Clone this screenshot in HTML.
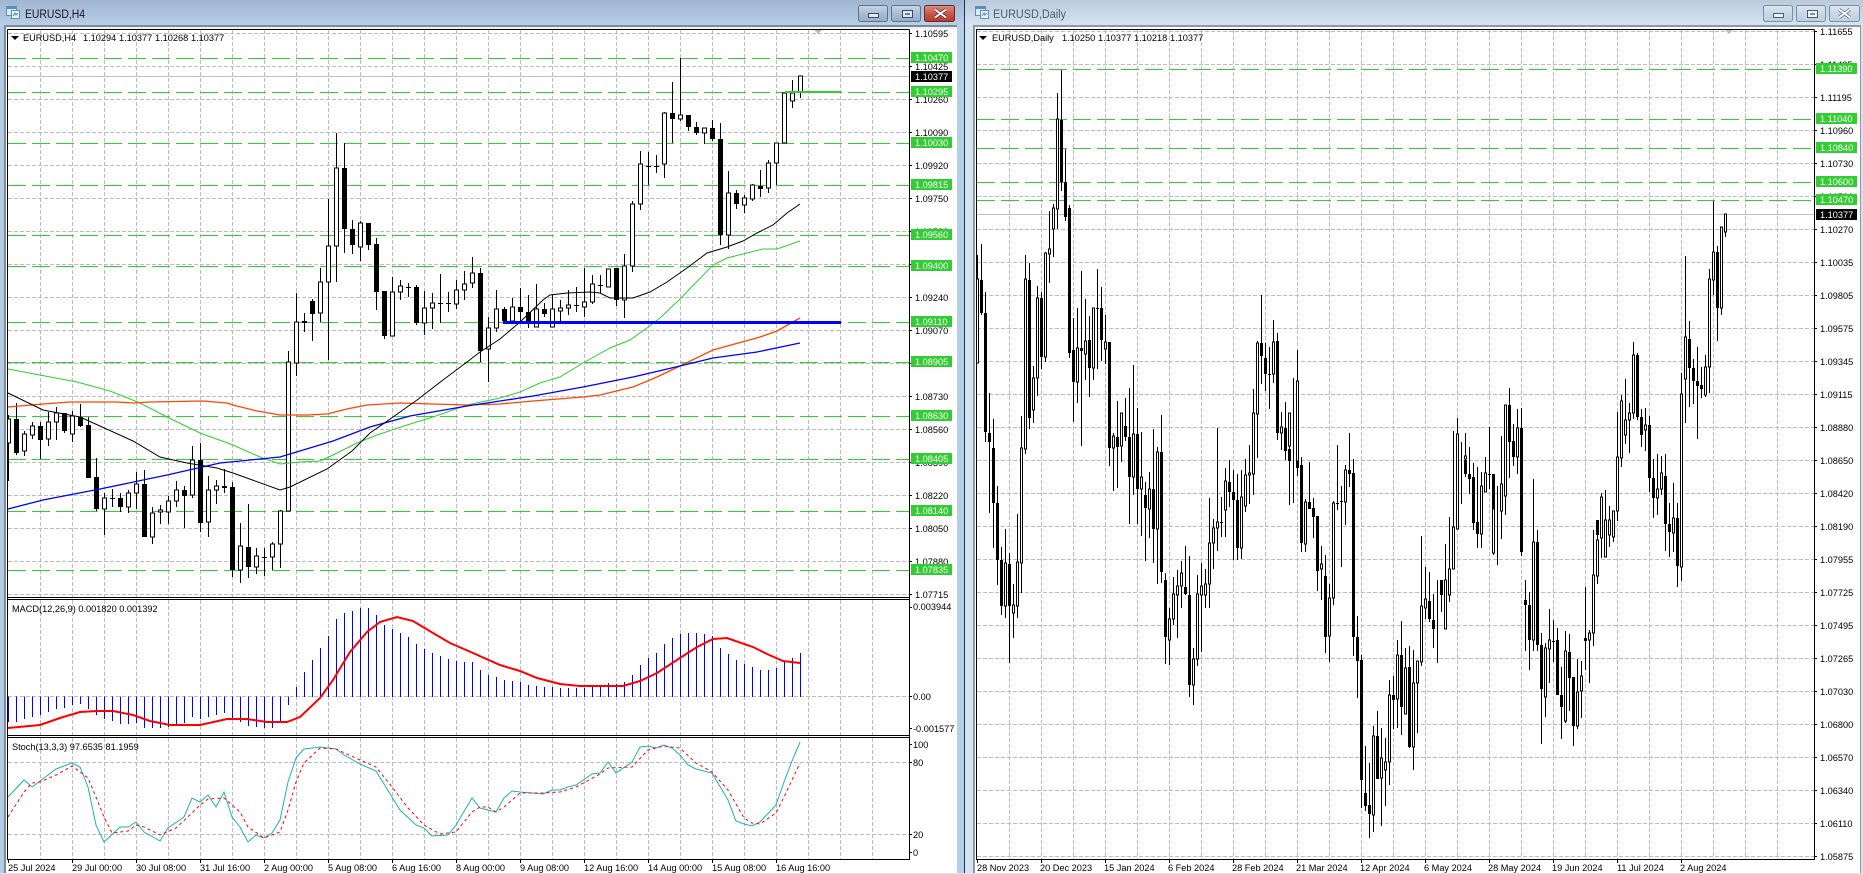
<!DOCTYPE html>
<html><head><meta charset="utf-8"><title>EURUSD</title>
<style>
html,body{margin:0;padding:0;background:#fff;overflow:hidden}
svg{display:block}
text{font-family:"Liberation Sans",sans-serif;font-size:9.2px;fill:#000}
.w{fill:#fff}
</style></head><body>
<svg xmlns="http://www.w3.org/2000/svg" width="1863" height="874" viewBox="0 0 1863 874">
<defs>
<linearGradient id="ta" x1="0" y1="0" x2="0" y2="1"><stop offset="0" stop-color="#9fb5d1"/><stop offset="1" stop-color="#b9d0e9"/></linearGradient>
<linearGradient id="ti" x1="0" y1="0" x2="0" y2="1"><stop offset="0" stop-color="#bbcadb"/><stop offset="1" stop-color="#d6e5f3"/></linearGradient>
<linearGradient id="ba" x1="0" y1="0" x2="0" y2="1"><stop offset="0" stop-color="#c6d4e4"/><stop offset=".5" stop-color="#a9bdd4"/><stop offset="1" stop-color="#94adc9"/></linearGradient>
<linearGradient id="bc" x1="0" y1="0" x2="0" y2="1"><stop offset="0" stop-color="#dc8c80"/><stop offset=".5" stop-color="#c8584a"/><stop offset="1" stop-color="#b53a2c"/></linearGradient>
<linearGradient id="bi" x1="0" y1="0" x2="0" y2="1"><stop offset="0" stop-color="#dbe5ef"/><stop offset=".5" stop-color="#c9d8e7"/><stop offset="1" stop-color="#bccfe2"/></linearGradient>
</defs>

<!-- window chrome -->
<rect width="1863" height="874" fill="#fff"/>
<rect x="0" y="0" width="965" height="26" fill="url(#ta)"/>
<rect x="965" y="0" width="898" height="26" fill="url(#ti)"/>
<rect x="0" y="26" width="4" height="848" fill="#b3cbe5"/>
<rect x="4" y="25" width="953" height="2" fill="#808a96"/>
<rect x="4" y="27" width="2" height="847" fill="#808a96"/>
<rect x="6" y="27" width="951" height="2" fill="#eef2f6"/>
<rect x="957" y="26" width="7" height="848" fill="#b6cfe8"/>
<rect x="964" y="0" width="1" height="874" fill="#1c3550"/>
<rect x="965" y="26" width="8" height="848" fill="#d3e3f2"/>
<rect x="973" y="25" width="888" height="2" fill="#8e98a3"/>
<rect x="973" y="25" width="2" height="849" fill="#8e98a3"/>
<rect x="1860" y="25" width="1" height="849" fill="#8e98a3"/>
<rect x="1861" y="26" width="2" height="848" fill="#d3e3f2"/>

<!-- title icons -->
<g fill="none">
<rect x="6.5" y="6.5" width="10" height="9" fill="#dce9f6" stroke="#5b8fc4"/><rect x="6.5" y="6.5" width="10" height="2.5" fill="#5b8fc4"/>
<rect x="11.5" y="10.5" width="8" height="8" fill="#eef5fb" stroke="#5b8fc4"/><path d="M13 16l2-3 1 2 2-2" stroke="#4a7fb5"/>
<rect x="975.5" y="6.5" width="10" height="9" fill="#dce9f6" stroke="#5b8fc4"/><rect x="975.5" y="6.5" width="10" height="2.5" fill="#5b8fc4"/>
<rect x="980.5" y="10.5" width="8" height="8" fill="#eef5fb" stroke="#5b8fc4"/><path d="M982 16l2-3 1 2 2-2" stroke="#4a7fb5"/>
</g>
<text x="25" y="18" style="font-size:11.5px;fill:#1c1426" textLength="60" lengthAdjust="spacingAndGlyphs">EURUSD,H4</text>
<text x="993" y="18" style="font-size:11.5px;fill:#4e5c6c" textLength="73" lengthAdjust="spacingAndGlyphs">EURUSD,Daily</text>

<!-- buttons active -->
<rect x="858.5" y="5.5" width="29" height="16" rx="2" fill="url(#ba)" stroke="#5e7288"/>
<rect x="891.5" y="5.5" width="29" height="16" rx="2" fill="url(#ba)" stroke="#5e7288"/>
<rect x="924.5" y="5.5" width="30" height="16" rx="2" fill="url(#bc)" stroke="#6b2a24"/>
<rect x="868.5" y="13.5" width="10" height="4" fill="#e4ebf2" stroke="#3e4b5a"/>
<rect x="902.5" y="10.5" width="10" height="7" fill="#dfe7ef" stroke="#3e4b5a"/><rect x="905" y="13" width="5" height="2" fill="#6f8298"/>
<path d="M935 9.5l11 8M946 9.5l-11 8" stroke="#5b2a24" stroke-width="3.4"/><path d="M935 9.5l11 8M946 9.5l-11 8" stroke="#fff" stroke-width="2"/>
<!-- buttons inactive -->
<rect x="1763.5" y="5.5" width="29" height="16" rx="2" fill="url(#bi)" stroke="#7e8fa1"/>
<rect x="1796.5" y="5.5" width="29" height="16" rx="2" fill="url(#bi)" stroke="#7e8fa1"/>
<rect x="1829.5" y="5.5" width="30" height="16" rx="2" fill="url(#bi)" stroke="#7e8fa1"/>
<rect x="1773.5" y="13.5" width="10" height="4" fill="#eef3f8" stroke="#4c5a69"/>
<rect x="1807.5" y="10.5" width="10" height="7" fill="#eef3f8" stroke="#4c5a69"/><rect x="1810" y="13" width="5" height="2" fill="#8496a9"/>
<path d="M1839 9.5l11 8M1850 9.5l-11 8" stroke="#5c6a7a" stroke-width="3.4"/><path d="M1839 9.5l11 8M1850 9.5l-11 8" stroke="#fff" stroke-width="2"/>

<!-- LEFT grid -->
<g fill="none" stroke="#bdbdbd" stroke-dasharray="4 2">
<path d="M40.5 30V859M72.5 30V859M104.5 30V859M136.5 30V859M168.5 30V859M200.5 30V859M232.5 30V859M264.5 30V859M296.5 30V859M328.5 30V859M360.5 30V859M392.5 30V859M424.5 30V859M456.5 30V859M488.5 30V859M520.5 30V859M552.5 30V859M584.5 30V859M616.5 30V859M648.5 30V859M680.5 30V859M712.5 30V859M744.5 30V859M776.5 30V859M808.5 30V859M840.5 30V859M872.5 30V859"/>
<path d="M8 33.5H909M8 66.5H909M8 99.5H909M8 132.5H909M8 165.5H909M8 198.5H909M8 231.5H909M8 264.5H909M8 297.5H909M8 330.5H909M8 363.5H909M8 396.5H909M8 429.5H909M8 462.5H909M8 495.5H909M8 528.5H909M8 561.5H909M8 594.5H909M8 696.5H909M8 762.5H909M8 834.5H909"/>
</g>
<path d="M8 76.5H909" stroke="#bfbfbf" fill="none"/>
<g fill="none" stroke="#32cd32" stroke-dasharray="18 6">
<path d="M8 58.5H909M8 92.5H909M8 143.5H909M8 185.5H909M8 235.5H909M8 266.5H909M8 322.5H909M8 362.5H909M8 416.5H909M8 459.5H909M8 511.5H909M8 570.5H909"/>
</g>

<!-- LEFT candles -->
<path fill="none" stroke="#000" d="M8.5 415V481M16.5 403V455M24.5 431V456M32.5 422V439M40.5 422V459M48.5 412V446M56.5 407V440M64.5 413V433M72.5 411V442M80.5 404V427M88.5 417V478M96.5 458V511M104.5 493V535M112.5 489V507M120.5 493V512M128.5 490V513M136.5 472V509M144.5 470V537M152.5 507V544M160.5 505V524M168.5 496V524M176.5 481V507M184.5 486V528M192.5 446V498M200.5 443V532M208.5 476V537M216.5 480V504M224.5 469V493M232.5 482V577M240.5 523V583M248.5 504V578M256.5 548V574M264.5 548V576M272.5 542V570M280.5 510V568M288.5 351V511M296.5 293V376M304.5 313V332M312.5 299V341M320.5 268V322M328.5 199V360M336.5 133V282M344.5 143V253M352.5 220V254M360.5 221V261M368.5 223V250M376.5 238V310M384.5 291V339M392.5 277V336M400.5 280V300M408.5 283V297M416.5 285V325M424.5 291V335M432.5 293V329M440.5 274V323M448.5 292V312M456.5 280V309M464.5 271V300M472.5 257V288M480.5 268V362M488.5 317V382M496.5 290V332M504.5 307V323M512.5 298V323M520.5 288V321M528.5 295V328M536.5 284V327M544.5 303V317M552.5 295V327M560.5 300V322M568.5 290V315M576.5 287V312M584.5 268V317M592.5 275V304M600.5 275V293M608.5 269V287M616.5 268V306M624.5 254V318M632.5 201V272M640.5 151V210M648.5 152V185M656.5 155V173M664.5 112V178M672.5 82V143M680.5 58V121M688.5 115V131M696.5 122V135M704.5 128V144M712.5 120V141M720.5 123V245M728.5 171V249M736.5 190V209M744.5 195V213M752.5 184V201M760.5 170V197M768.5 160V193M776.5 143V185M784.5 93V143M792.5 80V108M800.5 76V98"/>
<path fill="none" stroke="#000" stroke-width="5" d="M16.5 419V453M40.5 426V440M64.5 413V431M80.5 417V426M88.5 425V478M96.5 477V509M112.5 498V499M120.5 498V507M144.5 484V537M184.5 490V496M200.5 460V523M224.5 486V488M232.5 487V570M248.5 547V567M264.5 557V558M304.5 321V323M312.5 301V314M344.5 168V229M352.5 229V245M368.5 223V245M376.5 244V292M384.5 291V336M408.5 287V288M416.5 287V323M440.5 303V304M448.5 303V304M480.5 273V351M504.5 309V321M520.5 307V312M528.5 312V323M544.5 309V314M576.5 305V306M600.5 285V286M616.5 268V300M648.5 166V167M656.5 166V167M672.5 113V119M688.5 115V127M696.5 127V133M712.5 128V139M720.5 139V235M736.5 193V204M760.5 186V189"/>
<path fill="#fff" stroke="#000" d="M6.5 419h4V443h-4zM22.5 434h4V451h-4zM30.5 426h4V435h-4zM46.5 422h4V439h-4zM54.5 413h4V422h-4zM70.5 416h4V434h-4zM102.5 498h4V509h-4zM126.5 493h4V507h-4zM134.5 484h4V493h-4zM150.5 513h4V537h-4zM158.5 510h4V512h-4zM166.5 501h4V512h-4zM174.5 490h4V501h-4zM190.5 460h4V495h-4zM206.5 490h4V522h-4zM214.5 486h4V490h-4zM238.5 546h4V570h-4zM254.5 556h4V567h-4zM270.5 544h4V557h-4zM278.5 511h4V544h-4zM286.5 362h4V511h-4zM294.5 322h4V363h-4zM318.5 282h4V313h-4zM326.5 246h4V282h-4zM334.5 168h4V246h-4zM358.5 223h4V247h-4zM390.5 292h4V336h-4zM398.5 286h4V292h-4zM422.5 308h4V323h-4zM430.5 303h4V308h-4zM454.5 290h4V304h-4zM462.5 284h4V290h-4zM470.5 273h4V283h-4zM486.5 328h4V349h-4zM494.5 309h4V328h-4zM510.5 307h4V321h-4zM534.5 309h4V327h-4zM550.5 309h4V327h-4zM558.5 308h4V311h-4zM566.5 305h4V308h-4zM582.5 302h4V307h-4zM590.5 284h4V302h-4zM606.5 269h4V287h-4zM622.5 266h4V300h-4zM630.5 204h4V266h-4zM638.5 164h4V204h-4zM662.5 113h4V164h-4zM678.5 115h4V119h-4zM702.5 128h4V133h-4zM726.5 193h4V235h-4zM742.5 198h4V205h-4zM750.5 185h4V199h-4zM766.5 163h4V188h-4zM774.5 143h4V163h-4zM782.5 93h4V143h-4zM790.5 93h4V101h-4zM798.5 76h4V92h-4z"/>

<!-- LEFT MAs -->
<g fill="none">
<polyline stroke="#32cd32" points="8,369 77,382 110,391 140,403 167,417 200,433 233,445 260,457 280,464 300,462 320,461 333,455 357,443 377,435 407,425 433,417 467,405 500,398 520,392 540,383 560,377 583,363 610,348 630,340 647,328 660,318 680,299 713,265 727,258 763,249 777,249 800,241"/>
<polyline stroke="#ff4500" stroke-width="1.3" points="8,407 43,404 70,402 117,402 133,403 150,402 203,401 227,403 233,405 257,411 280,415 307,415 327,414 347,409 367,405 400,403 433,404 467,405 500,404 533,401 583,397 600,395 633,387 657,377 680,366 713,350 760,337 777,331 800,318"/>
<polyline stroke="#0000ff" stroke-width="1.3" points="8,509 43,500 100,489 167,475 220,463 280,457 333,441 370,427 410,416 467,406 500,401 533,396 583,387 633,377 680,366 713,358 757,352 800,343"/>
<polyline stroke="#000" points="8,393 43,410 80,417 133,441 160,457 187,463 217,468 233,473 280,490 290,487 327,469 352,451 370,433 393,417 417,400 443,380 467,362 480,352 500,339 520,322 543,300 550,295 567,293 590,292 600,293 610,298 633,298 650,292 667,282 687,268 707,253 727,247 743,241 757,233 773,225 787,213 800,204"/>
</g>
<rect x="503" y="321" width="338" height="3" fill="#0000ff"/>
<rect x="785" y="91" width="56" height="2" fill="#32cd32"/>
<path d="M814 30h8l-4 4z" fill="#bdbdbd"/>
<path d="M11 36h8l-4 4z" fill="#000"/>

<!-- MACD -->
<rect x="0" y="0" width="0" height="0"/>
<path fill="none" stroke="#0000ff" d="M8.5 696.5V722M16.5 696.5V722M24.5 696.5V719M32.5 696.5V717M40.5 696.5V715M48.5 696.5V712M56.5 696.5V709M64.5 696.5V708M72.5 696.5V705M80.5 696.5V704M88.5 696.5V709M96.5 696.5V715M104.5 696.5V719M112.5 696.5V721M120.5 696.5V724M128.5 696.5V724M136.5 696.5V723M144.5 696.5V728M152.5 696.5V728M160.5 696.5V728M168.5 696.5V727M176.5 696.5V725M184.5 696.5V723M192.5 696.5V717M200.5 696.5V719M208.5 696.5V717M216.5 696.5V715M224.5 696.5V713M232.5 696.5V719M240.5 696.5V722M248.5 696.5V726M256.5 696.5V727M264.5 696.5V728M272.5 696.5V728M280.5 696.5V721M288.5 696.5V705M296.5 697V687M304.5 697V672M312.5 697V660M320.5 697V648M328.5 697V636M336.5 697V619M344.5 697V613M352.5 697V611M360.5 697V608M368.5 697V608M376.5 697V615M384.5 697V625M392.5 697V629M400.5 697V633M408.5 697V637M416.5 697V644M424.5 697V649M432.5 697V653M440.5 697V656M448.5 697V659M456.5 697V661M464.5 697V662M472.5 697V662M480.5 697V670M488.5 697V675M496.5 697V677M504.5 697V680M512.5 697V681M520.5 697V682M528.5 697V685M536.5 697V686M544.5 697V687M552.5 697V687M560.5 697V688M568.5 697V688M576.5 697V688M584.5 697V688M592.5 697V686M600.5 697V686M608.5 697V683M616.5 697V684M624.5 697V682M632.5 697V675M640.5 697V665M648.5 697V658M656.5 697V653M664.5 697V644M672.5 697V638M680.5 697V634M688.5 697V633M696.5 697V633M704.5 697V634M712.5 697V636M720.5 697V648M728.5 697V654M736.5 697V660M744.5 697V664M752.5 697V667M760.5 697V670M768.5 697V670M776.5 697V668M784.5 697V662M792.5 697V658M800.5 697V653"/>
<polyline fill="none" stroke="#ff0000" stroke-width="2" points="8,728 40,725 60,718 80,712 97,711 113,711 133,715 150,721 170,725 200,725 227,719 247,719 267,722 287,722 300,717 320,698 333,680 350,652 367,632 380,622 397,617 413,621 433,633 450,643 473,653 500,665 520,671 537,678 560,684 580,686 623,686 640,681 657,673 680,658 697,647 713,639 727,638 753,647 767,654 783,661 800,663"/>

<!-- Stoch -->
<polyline fill="none" stroke="#20b2aa" points="8,797 24,780 32,787 40,781 56,769 72,763 80,767 88,787 96,825 104,842 120,827 128,827 136,822 144,832 160,841 168,828 184,817 192,798 200,802 208,795 216,807 224,792 232,817 240,827 248,842 256,835 264,838 272,833 280,820 288,782 296,758 304,749 320,747 336,749 344,755 360,764 376,771 392,797 400,810 416,825 424,828 432,836 448,835 456,825 472,798 480,808 496,812 504,798 512,791 520,792 543,794 552,790 560,790 568,787 576,785 592,774 600,773 608,762 616,773 632,762 640,747 648,746 656,748 664,745 672,748 680,755 688,765 696,769 712,773 728,800 736,821 744,824 752,826 760,822 776,805 784,782 792,761 800,742"/>
<polyline fill="none" stroke="#ff0000" stroke-dasharray="3 3" points="8,817 24,792 32,783 40,782 56,775 72,766 88,778 96,797 104,817 112,833 128,831 136,825 144,827 160,835 176,828 192,813 200,805 208,799 224,798 240,812 248,827 264,838 280,832 288,810 296,782 304,763 320,748 336,749 360,760 376,767 392,787 408,808 424,825 440,834 456,832 472,812 480,807 488,807 496,812 504,807 520,793 543,793 560,792 576,787 600,774 608,768 632,767 648,750 664,746 680,748 696,763 712,772 728,790 744,818 752,823 760,824 776,813 784,797 800,763"/>

<!-- LEFT frame -->
<path fill="none" stroke="#000" d="M7.5 29.5V859.5M7.5 29.5H909.5M909.5 29.5V859.5M7 597.5H910M7 599.5H910M7 735.5H910M7 737.5H910M7 859.5H910"/>
<rect x="6" y="30" width="1" height="844" fill="#fff"/>
<path fill="none" stroke="#000" d="M909 33.5h3M909 66.5h3M909 99.5h3M909 132.5h3M909 165.5h3M909 198.5h3M909 231.5h3M909 264.5h3M909 297.5h3M909 330.5h3M909 363.5h3M909 396.5h3M909 429.5h3M909 462.5h3M909 495.5h3M909 528.5h3M909 561.5h3M909 594.5h3M909 607.5h3M909 696.5h3M909 728.5h3M909 744.5h3M909 762.5h3M909 834.5h3M909 852.5h3M8.5 859v4M72.5 859v4M136.5 859v4M200.5 859v4M264.5 859v4M328.5 859v4M392.5 859v4M456.5 859v4M520.5 859v4M584.5 859v4M648.5 859v4M712.5 859v4M776.5 859v4"/>

<!-- LEFT text -->
<text x="23" y="41">EURUSD,H4</text><text x="83" y="41">1.10294</text><text x="119" y="41">1.10377</text><text x="155" y="41">1.10268</text><text x="191" y="41">1.10377</text>
<text x="12" y="612">MACD(12,26,9) 0.001820 0.001392</text>
<text x="12" y="750">Stoch(13,3,3) 97.6535 81.1959</text>
<g>
<text x="915" y="37">1.10595</text><text x="915" y="70">1.10425</text><text x="915" y="103">1.10260</text><text x="915" y="136">1.10090</text><text x="915" y="169">1.09920</text><text x="915" y="202">1.09750</text><text x="915" y="235">1.09580</text><text x="915" y="268">1.09410</text><text x="915" y="301">1.09240</text><text x="915" y="334">1.09070</text><text x="915" y="367">1.08900</text><text x="915" y="400">1.08730</text><text x="915" y="433">1.08560</text><text x="915" y="466">1.08390</text><text x="915" y="499">1.08220</text><text x="915" y="532">1.08050</text><text x="915" y="565">1.07880</text><text x="915" y="598">1.07715</text>
<text x="913" y="610">0.003944</text><text x="913" y="700">0.00</text><text x="913" y="732">-0.001577</text>
<text x="913" y="748">100</text><text x="913" y="766">80</text><text x="913" y="838">20</text><text x="913" y="856">0</text>
</g>
<g fill="#32cd32">
<rect x="911" y="52" width="41" height="11"/><rect x="911" y="86" width="41" height="11"/><rect x="911" y="137" width="41" height="11"/><rect x="911" y="179" width="41" height="11"/><rect x="911" y="229" width="41" height="11"/><rect x="911" y="260" width="41" height="11"/><rect x="911" y="316" width="41" height="11"/><rect x="911" y="356" width="41" height="11"/><rect x="911" y="410" width="41" height="11"/><rect x="911" y="453" width="41" height="11"/><rect x="911" y="505" width="41" height="11"/><rect x="911" y="564" width="41" height="11"/>
</g>
<rect x="911" y="71" width="41" height="11" fill="#000"/>
<g>
<text class="w" x="915" y="61">1.10470</text><text class="w" x="915" y="80">1.10377</text><text class="w" x="915" y="95">1.10295</text><text class="w" x="915" y="146">1.10030</text><text class="w" x="915" y="188">1.09815</text><text class="w" x="915" y="238">1.09560</text><text class="w" x="915" y="269">1.09400</text><text class="w" x="915" y="325">1.09110</text><text class="w" x="915" y="365">1.08905</text><text class="w" x="915" y="419">1.08630</text><text class="w" x="915" y="462">1.08405</text><text class="w" x="915" y="514">1.08140</text><text class="w" x="915" y="573">1.07835</text>
</g>
<g>
<text x="8" y="871">25 Jul 2024</text><text x="72" y="871">29 Jul 00:00</text><text x="136" y="871">30 Jul 08:00</text><text x="200" y="871">31 Jul 16:00</text><text x="264" y="871">2 Aug 00:00</text><text x="328" y="871">5 Aug 08:00</text><text x="392" y="871">6 Aug 16:00</text><text x="456" y="871">8 Aug 00:00</text><text x="520" y="871">9 Aug 08:00</text><text x="584" y="871">12 Aug 16:00</text><text x="648" y="871">14 Aug 00:00</text><text x="712" y="871">15 Aug 08:00</text><text x="776" y="871">16 Aug 16:00</text>
</g>

<!-- RIGHT grid -->
<g fill="none" stroke="#bdbdbd" stroke-dasharray="4 2">
<path d="M1009.5 30V859M1041.5 30V859M1073.5 30V859M1105.5 30V859M1137.5 30V859M1169.5 30V859M1201.5 30V859M1233.5 30V859M1265.5 30V859M1297.5 30V859M1329.5 30V859M1361.5 30V859M1393.5 30V859M1425.5 30V859M1457.5 30V859M1489.5 30V859M1521.5 30V859M1553.5 30V859M1585.5 30V859M1617.5 30V859M1649.5 30V859M1681.5 30V859M1713.5 30V859M1745.5 30V859M1777.5 30V859"/>
<path d="M977 31.5H1814M977 64.5H1814M977 97.5H1814M977 130.5H1814M977 163.5H1814M977 196.5H1814M977 229.5H1814M977 262.5H1814M977 295.5H1814M977 328.5H1814M977 361.5H1814M977 394.5H1814M977 427.5H1814M977 460.5H1814M977 493.5H1814M977 526.5H1814M977 559.5H1814M977 592.5H1814M977 625.5H1814M977 658.5H1814M977 691.5H1814M977 724.5H1814M977 757.5H1814M977 790.5H1814M977 823.5H1814M977 856.5H1814"/>
</g>
<path d="M977 214.5H1814" stroke="#bfbfbf" fill="none"/>
<g fill="none" stroke="#32cd32" stroke-dasharray="18 6">
<path d="M977 69.5H1814M977 119.5H1814M977 148.5H1814M977 182.5H1814M977 200.5H1814"/>
</g>

<!-- RIGHT candles -->
<path fill="none" stroke="#000" d="M977.5 255V363M981.5 244V315M985.5 292V442M989.5 393V513M993.5 419V548M997.5 486V585M1001.5 547V615M1005.5 529V618M1009.5 553V663M1013.5 584V638M1017.5 514V618M1021.5 416V593M1025.5 255V454M1029.5 263V429M1033.5 366V423M1037.5 286V396M1041.5 292V369M1045.5 252V362M1049.5 211V283M1053.5 204V257M1057.5 93V229M1061.5 70V191M1065.5 149V221M1069.5 205V358M1073.5 318V422M1077.5 308V403M1081.5 271V446M1085.5 299V380M1089.5 316V397M1093.5 308V380M1097.5 269V369M1101.5 287V361M1105.5 315V364M1109.5 342V466M1113.5 433V491M1117.5 401V488M1121.5 413V462M1125.5 398V441M1129.5 388V524M1133.5 365V495M1137.5 408V524M1141.5 432V536M1145.5 482V561M1149.5 472V538M1153.5 429V563M1157.5 447V584M1161.5 415V583M1165.5 573V664M1169.5 608V665M1173.5 577V625M1177.5 570V638M1181.5 561V608M1185.5 546V595M1189.5 556V697M1193.5 648V705M1197.5 575V666M1201.5 563V652M1205.5 569V608M1209.5 498V608M1213.5 519V569M1217.5 428V551M1221.5 497V537M1225.5 468V537M1229.5 460V507M1233.5 470V560M1237.5 474V560M1241.5 470V559M1245.5 459V512M1249.5 445V504M1253.5 389V495M1257.5 341V458M1261.5 295V384M1265.5 343V391M1269.5 347V409M1273.5 320V383M1277.5 333V440M1281.5 412V450M1285.5 402V460M1289.5 445V505M1293.5 378V503M1297.5 350V476M1301.5 457V552M1305.5 499V552M1309.5 462V509M1313.5 498V538M1317.5 516V591M1321.5 546V600M1325.5 555V653M1329.5 584V662M1333.5 501V605M1337.5 445V510M1341.5 486V567M1345.5 465V525M1349.5 433V487M1353.5 459V656M1357.5 616V698M1361.5 655V808M1365.5 746V811M1369.5 763V838M1373.5 726V832M1377.5 711V779M1381.5 728V826M1385.5 738V806M1389.5 680V785M1393.5 676V729M1397.5 640V728M1401.5 621V735M1405.5 648V714M1409.5 646V748M1413.5 650V770M1417.5 661V733M1421.5 536V666M1425.5 567V619M1429.5 572V622M1433.5 594V648M1437.5 580V663M1441.5 580V612M1445.5 544V604M1449.5 517V602M1453.5 431V536M1457.5 418V477M1461.5 442V504M1465.5 433V477M1469.5 447V494M1473.5 463V530M1477.5 467V548M1481.5 472V548M1485.5 457V492M1489.5 427V489M1493.5 474V555M1497.5 486V565M1501.5 436V539M1505.5 405V515M1509.5 388V478M1513.5 424V466M1517.5 409V474M1521.5 408V556M1525.5 580V651M1529.5 592V670M1533.5 479V651M1537.5 530V651M1541.5 633V744M1545.5 643V717M1549.5 609V683M1553.5 620V662M1557.5 628V695M1561.5 667V739M1565.5 631V723M1569.5 634V711M1573.5 677V746M1577.5 659V729M1581.5 661V718M1585.5 587V670M1589.5 630V683M1593.5 530V646M1597.5 534V584M1601.5 493V558M1605.5 490V557M1609.5 506V547M1613.5 511V542M1617.5 412V521M1621.5 395V467M1625.5 379V444M1629.5 403V453M1633.5 342V419M1637.5 353V420M1641.5 409V447M1645.5 408V451M1649.5 416V492M1653.5 459V518M1657.5 454V515M1661.5 456V495M1665.5 454V551M1669.5 503V557M1673.5 483V552M1677.5 503V587M1681.5 373V581M1685.5 256V423M1689.5 321V407M1693.5 359V404M1697.5 347V439M1701.5 367V398M1705.5 355V397M1709.5 269V393M1713.5 201V295M1717.5 246V341M1721.5 227V315M1725.5 214V237"/>
<path fill="none" stroke="#000" stroke-width="3" d="M981.5 280V313M985.5 313V432M989.5 433V442M993.5 448V503M997.5 503V560M1001.5 560V606M1009.5 564V606M1029.5 280V418M1041.5 298V357M1061.5 120V182M1065.5 182V217M1069.5 208V353M1073.5 350V382M1081.5 348V351M1089.5 340V368M1097.5 308V309M1101.5 308V340M1109.5 342V448M1117.5 437V447M1125.5 426V437M1129.5 437V477M1137.5 434V489M1145.5 495V508M1153.5 489V529M1161.5 452V572M1165.5 580V637M1185.5 587V594M1189.5 595V685M1221.5 522V523M1229.5 482V492M1233.5 492V500M1237.5 500V548M1261.5 343V356M1265.5 358V374M1269.5 374V375M1277.5 341V433M1285.5 428V451M1289.5 449V461M1297.5 381V468M1301.5 465V543M1309.5 502V509M1313.5 508V517M1317.5 516V571M1325.5 576V637M1337.5 503V504M1341.5 501V502M1349.5 470V474M1353.5 473V637M1357.5 637V661M1361.5 660V780M1365.5 793V806M1369.5 805V814M1377.5 736V779M1393.5 695V700M1401.5 655V707M1409.5 667V747M1429.5 601V619M1433.5 620V629M1441.5 580V595M1457.5 434V459M1465.5 460V474M1469.5 474V479M1473.5 477V523M1477.5 522V534M1489.5 474V475M1493.5 474V553M1509.5 405V442M1513.5 441V457M1521.5 428V552M1525.5 600V605M1529.5 605V640M1537.5 542V645M1541.5 645V689M1553.5 641V642M1557.5 640V695M1561.5 695V707M1569.5 652V678M1573.5 677V726M1585.5 638V641M1597.5 520V535M1605.5 520V535M1637.5 355V417M1641.5 417V435M1649.5 425V478M1653.5 478V498M1665.5 476V524M1669.5 524V532M1677.5 518V566M1689.5 339V368M1693.5 368V381M1697.5 381V386M1701.5 385V389M1717.5 252V308"/>
<path fill="#fff" stroke="#000" d="M976.5 279h2V363h-2zM1004.5 563h2V606h-2zM1012.5 605h2V613h-2zM1016.5 562h2V606h-2zM1020.5 448h2V563h-2zM1024.5 279h2V449h-2zM1032.5 378h2V410h-2zM1036.5 298h2V378h-2zM1044.5 253h2V357h-2zM1048.5 249h2V254h-2zM1052.5 208h2V229h-2zM1056.5 119h2V209h-2zM1076.5 348h2V382h-2zM1084.5 341h2V354h-2zM1092.5 308h2V368h-2zM1104.5 342h2V349h-2zM1112.5 436h2V448h-2zM1120.5 413h2V446h-2zM1132.5 434h2V477h-2zM1140.5 477h2V489h-2zM1148.5 489h2V509h-2zM1156.5 452h2V529h-2zM1168.5 619h2V640h-2zM1172.5 594h2V619h-2zM1176.5 586h2V595h-2zM1180.5 573h2V586h-2zM1192.5 659h2V685h-2zM1196.5 594h2V659h-2zM1200.5 586h2V595h-2zM1204.5 584h2V595h-2zM1208.5 543h2V584h-2zM1212.5 528h2V543h-2zM1216.5 522h2V528h-2zM1224.5 481h2V510h-2zM1240.5 497h2V548h-2zM1244.5 475h2V506h-2zM1248.5 473h2V475h-2zM1252.5 413h2V474h-2zM1256.5 343h2V414h-2zM1272.5 342h2V374h-2zM1280.5 427h2V433h-2zM1288.5 413h2V446h-2zM1296.5 381h2V461h-2zM1304.5 502h2V544h-2zM1320.5 564h2V569h-2zM1328.5 598h2V636h-2zM1332.5 503h2V598h-2zM1344.5 470h2V502h-2zM1372.5 736h2V815h-2zM1380.5 758h2V778h-2zM1384.5 762h2V770h-2zM1388.5 695h2V762h-2zM1396.5 655h2V699h-2zM1404.5 668h2V714h-2zM1412.5 683h2V747h-2zM1416.5 661h2V683h-2zM1420.5 606h2V662h-2zM1424.5 599h2V608h-2zM1444.5 580h2V629h-2zM1448.5 569h2V595h-2zM1452.5 527h2V569h-2zM1456.5 434h2V529h-2zM1464.5 456h2V459h-2zM1480.5 486h2V534h-2zM1484.5 473h2V492h-2zM1492.5 509h2V553h-2zM1500.5 484h2V511h-2zM1504.5 405h2V496h-2zM1516.5 428h2V457h-2zM1532.5 542h2V640h-2zM1544.5 648h2V697h-2zM1548.5 640h2V649h-2zM1564.5 651h2V721h-2zM1576.5 692h2V726h-2zM1580.5 676h2V691h-2zM1588.5 633h2V640h-2zM1592.5 575h2V633h-2zM1596.5 540h2V576h-2zM1600.5 497h2V538h-2zM1604.5 520h2V557h-2zM1608.5 520h2V535h-2zM1612.5 511h2V537h-2zM1616.5 457h2V511h-2zM1620.5 401h2V458h-2zM1624.5 420h2V435h-2zM1628.5 413h2V420h-2zM1632.5 355h2V413h-2zM1644.5 425h2V430h-2zM1656.5 489h2V498h-2zM1660.5 473h2V489h-2zM1672.5 518h2V533h-2zM1680.5 394h2V567h-2zM1684.5 337h2V379h-2zM1704.5 367h2V395h-2zM1708.5 279h2V367h-2zM1712.5 252h2V280h-2zM1720.5 227h2V308h-2zM1724.5 214h2V232h-2z"/>
<path d="M1725 30h8l-4 4z" fill="#bdbdbd"/>
<path d="M979 36h8l-4 4z" fill="#000"/>

<!-- RIGHT frame -->
<path fill="none" stroke="#000" d="M976.5 29.5V859.5M976 29.5H1814.5M1814.5 29.5V859.5M976 859.5H1815M1814 31.5h3M1814 64.5h3M1814 97.5h3M1814 130.5h3M1814 163.5h3M1814 196.5h3M1814 229.5h3M1814 262.5h3M1814 295.5h3M1814 328.5h3M1814 361.5h3M1814 394.5h3M1814 427.5h3M1814 460.5h3M1814 493.5h3M1814 526.5h3M1814 559.5h3M1814 592.5h3M1814 625.5h3M1814 658.5h3M1814 691.5h3M1814 724.5h3M1814 757.5h3M1814 790.5h3M1814 823.5h3M1814 856.5h3M977.5 859v4M1041.5 859v4M1105.5 859v4M1169.5 859v4M1233.5 859v4M1297.5 859v4M1361.5 859v4M1425.5 859v4M1489.5 859v4M1553.5 859v4M1617.5 859v4M1681.5 859v4"/>

<!-- RIGHT text -->
<text x="992" y="41">EURUSD,Daily</text><text x="1062" y="41">1.10250</text><text x="1098" y="41">1.10377</text><text x="1134" y="41">1.10218</text><text x="1170" y="41">1.10377</text>
<g>
<text x="1820" y="35">1.11655</text><text x="1820" y="68">1.11425</text><text x="1820" y="101">1.11195</text><text x="1820" y="134">1.10960</text><text x="1820" y="167">1.10730</text><text x="1820" y="200">1.10500</text><text x="1820" y="233">1.10270</text><text x="1820" y="266">1.10035</text><text x="1820" y="299">1.09805</text><text x="1820" y="332">1.09575</text><text x="1820" y="365">1.09345</text><text x="1820" y="398">1.09115</text><text x="1820" y="431">1.08880</text><text x="1820" y="464">1.08650</text><text x="1820" y="497">1.08420</text><text x="1820" y="530">1.08190</text><text x="1820" y="563">1.07955</text><text x="1820" y="596">1.07725</text><text x="1820" y="629">1.07495</text><text x="1820" y="662">1.07265</text><text x="1820" y="695">1.07030</text><text x="1820" y="728">1.06800</text><text x="1820" y="761">1.06570</text><text x="1820" y="794">1.06340</text><text x="1820" y="827">1.06110</text><text x="1820" y="860">1.05875</text>
</g>
<g fill="#32cd32">
<rect x="1816" y="63" width="41" height="11"/><rect x="1816" y="113" width="41" height="11"/><rect x="1816" y="142" width="41" height="11"/><rect x="1816" y="176" width="41" height="11"/><rect x="1816" y="194" width="41" height="11"/>
</g>
<rect x="1816" y="209" width="41" height="11" fill="#000"/>
<text class="w" x="1820" y="72">1.11390</text><text class="w" x="1820" y="122">1.11040</text><text class="w" x="1820" y="151">1.10840</text><text class="w" x="1820" y="185">1.10600</text><text class="w" x="1820" y="203">1.10470</text><text class="w" x="1820" y="218">1.10377</text>
<g>
<text x="977" y="871">28 Nov 2023</text><text x="1040" y="871">20 Dec 2023</text><text x="1104" y="871">15 Jan 2024</text><text x="1168" y="871">6 Feb 2024</text><text x="1232" y="871">28 Feb 2024</text><text x="1296" y="871">21 Mar 2024</text><text x="1360" y="871">12 Apr 2024</text><text x="1424" y="871">6 May 2024</text><text x="1488" y="871">28 May 2024</text><text x="1552" y="871">19 Jun 2024</text><text x="1617" y="871">11 Jul 2024</text><text x="1680" y="871">2 Aug 2024</text>
</g>
<rect x="0" y="873" width="1863" height="1" fill="#e4e4e4"/>
</svg>
</body></html>
